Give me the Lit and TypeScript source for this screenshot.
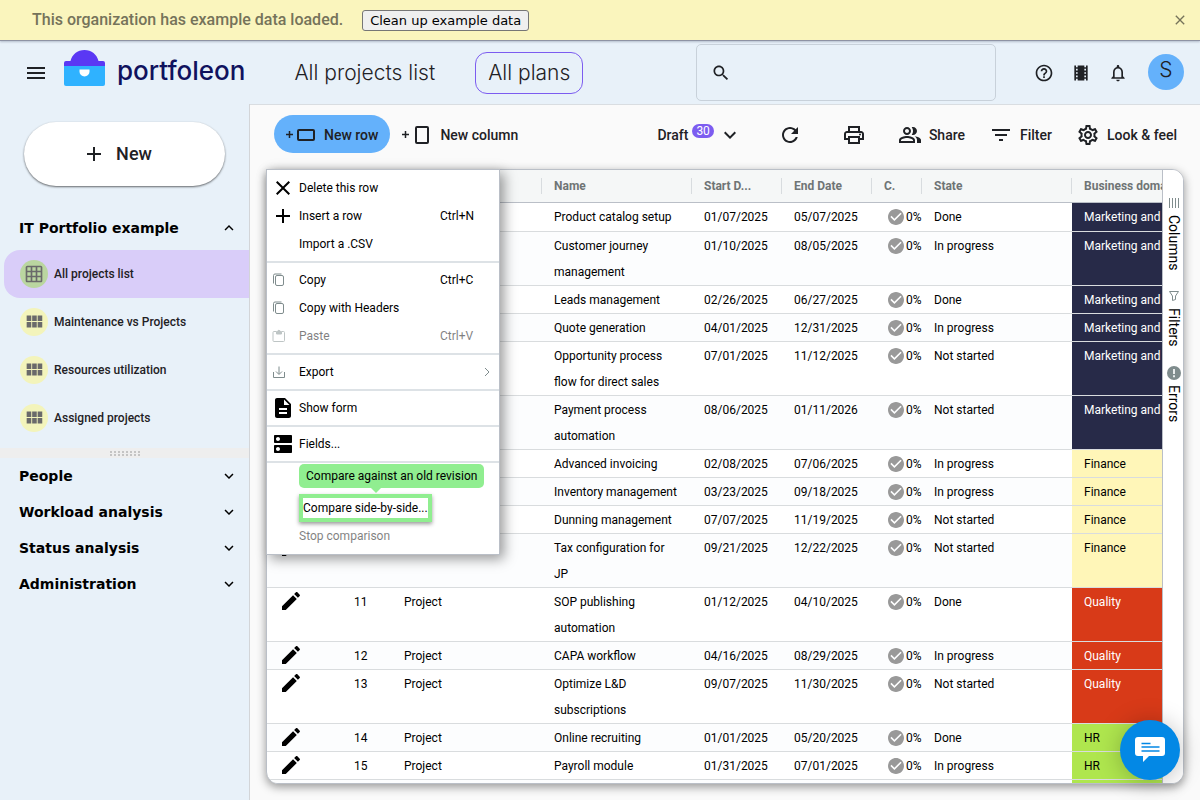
import { LitElement, html, css, svg, nothing } from "lit";
import { customElement, state } from "lit/decorators.js";
import { classMap } from "lit/directives/class-map.js";

const icon = (d: string, size = 24) =>
  html`<svg class="icon" width=${size} height=${size} viewBox="0 0 24 24" fill="currentColor" aria-hidden="true"><path d=${d}></path></svg>`;

const P = {
  menu: "M3 18h18v-2H3v2zm0-5h18v-2H3v2zm0-7v2h18V6H3z",
  search:
    "M15.5 14h-.79l-.28-.27C15.41 12.59 16 11.11 16 9.5 16 5.91 13.09 3 9.5 3S3 5.91 3 9.5 5.91 16 9.5 16c1.61 0 3.09-.59 4.23-1.57l.27.28v.79l5 4.99L20.49 19l-4.99-5zm-6 0C7.01 14 5 11.99 5 9.5S7.01 5 9.5 5 14 7.01 14 9.5 11.99 14 9.5 14z",
  help: "M11 18h2v-2h-2v2zm1-16C6.48 2 2 6.48 2 12s4.48 10 10 10 10-4.48 10-10S17.52 2 12 2zm0 18c-4.41 0-8-3.59-8-8s3.59-8 8-8 8 3.59 8 8-3.59 8-8 8zm0-14c-2.21 0-4 1.79-4 4h2c0-1.1.9-2 2-2s2 .9 2 2c0 2-3 1.75-3 5h2c0-2.25 3-2.5 3-5 0-2.21-1.79-4-4-4z",
  film: "M18 3v2h-2V3H8v2H6V3H4v18h2v-2h2v2h8v-2h2v2h2V3h-2zM8 17H6v-2h2v2zm0-4H6v-2h2v2zm0-4H6V7h2v2zm10 8h-2v-2h2v2zm0-4h-2v-2h2v2zm0-4h-2V7h2v2z",
  bell: "M12 22c1.1 0 2-.9 2-2h-4c0 1.1.9 2 2 2zm6-6v-5c0-3.07-1.63-5.64-4.5-6.32V4c0-.83-.67-1.5-1.5-1.5s-1.5.67-1.5 1.5v.68C7.64 5.36 6 7.92 6 11v5l-2 2v1h16v-1l-2-2zm-2 1H8v-6c0-2.48 1.51-4.5 4-4.5s4 2.02 4 4.5v6z",
  close:
    "M19 6.41L17.59 5 12 10.59 6.41 5 5 6.41 10.59 12 5 17.59 6.41 19 12 13.41 17.59 19 19 17.59 13.41 12z",
  plus: "M19 13h-6v6h-2v-6H5v-2h6V5h2v6h6v2z",
  down: "M7.41 8.59L12 13.17l4.59-4.58L18 10l-6 6-6-6 1.41-1.41z",
  up: "M7.41 15.41L12 10.83l4.59 4.58L18 14l-6-6-6 6z",
  gridOn:
    "M20 2H4c-1.1 0-2 .9-2 2v16c0 1.1.9 2 2 2h16c1.1 0 2-.9 2-2V4c0-1.1-.9-2-2-2zM8 20H4v-4h4v4zm0-6H4v-4h4v4zm0-6H4V4h4v4zm6 12h-4v-4h4v4zm0-6h-4v-4h4v4zm0-6h-4V4h4v4zm6 12h-4v-4h4v4zm0-6h-4v-4h4v4zm0-6h-4V4h4v4z",
  module: "M4 11h5V5H4v6zm0 7h5v-6H4v6zm6 0h5v-6h-5v6zm6 0h5v-6h-5v6zm-6-7h5V5h-5v6zm6-6v6h5V5h-5z",
  refresh:
    "M17.65 6.35C16.2 4.9 14.21 4 12 4c-4.42 0-7.99 3.58-7.99 8s3.57 8 7.99 8c3.73 0 6.84-2.55 7.73-6h-2.08c-.82 2.33-3.04 4-5.65 4-3.31 0-6-2.69-6-6s2.69-6 6-6c1.66 0 3.14.69 4.22 1.78L13 11h7V4l-2.35 2.35z",
  print:
    "M19 8h-1V3H6v5H5c-1.66 0-3 1.34-3 3v6h4v4h12v-4h4v-6c0-1.66-1.34-3-3-3zM8 5h8v3H8V5zm8 12v2H8v-4h8v2zm2-2v-2H6v2H4v-4c0-.55.45-1 1-1h14c.55 0 1 .45 1 1v4h-2zM17 11.500a1 1 0 1 0 2 0a1 1 0 1 0-2 0z",
  people:
    "M16.67 13.13C18.04 14.06 19 15.32 19 17v3h4v-3c0-2.18-3.57-3.47-6.33-3.87zM15 12c2.21 0 4-1.79 4-4s-1.79-4-4-4c-.47 0-.91.1-1.33.24C14.5 5.27 15 6.58 15 8s-.5 2.73-1.33 3.76c.42.14.86.24 1.33.24zM9 12c2.21 0 4-1.79 4-4s-1.790-4-4-4-4 1.790-4 4 1.790 4 4 4zm0-6c1.100 0 2 .9 2 2s-.9 2-2 2-2-.9-2-2 .9-2 2-2zM9 13c-2.670 0-8 1.340-8 4v3h16v-3c0-2.660-5.330-4-8-4zm6 5H3v-.99C3.200 16.290 6.300 15 9 15s5.800 1.290 6 2v1z",
  filter: "M10 18h4v-2h-4v2zM3 6v2h18V6H3zm3 7h12v-2H6v2z",
  gear: "M19.43 12.98c.04-.32.07-.64.07-.98 0-.34-.03-.66-.07-.98l2.110-1.650c.19-.15.24-.42.12-.64l-2-3.460c-.09-.16-.26-.25-.44-.25-.06 0-.12.010-.17.030l-2.490 1c-.52-.4-1.080-.73-1.690-.98l-.38-2.650C14.460 2.180 14.250 2 14 2h-4c-.25 0-.46.18-.49.42l-.38 2.650c-.61.25-1.170.59-1.690.98l-2.490-1c-.06-.02-.12-.03-.18-.03-.17 0-.34.09-.43.25l-2 3.460c-.13.22-.07.49.12.64l2.110 1.650c-.04.32-.07.65-.07.98 0 .33.030.66.070.98l-2.110 1.650c-.19.15-.24.42-.12.64l2 3.460c.09.16.26.25.44.25.06 0 .12-.01.17-.03l2.490-1c.52.4 1.080.73 1.690.98l.38 2.650c.03.24.24.42.49.42h4c.25 0 .46-.18.49-.42l.38-2.650c.61-.25 1.170-.59 1.690-.98l2.490 1c.06.02.12.03.18.03.17 0 .34-.09.43-.25l2-3.460c.12-.22.07-.49-.12-.64l-2.110-1.650zm-1.980-1.710c.04.31.05.52.05.73 0 .21-.02.43-.05.73l-.14 1.130.89.7 1.080.84-.7 1.210-1.270-.51-1.040-.42-.9.680c-.43.32-.84.56-1.250.73l-1.060.43-.16 1.130-.2 1.350h-1.400l-.19-1.350-.16-1.130-1.060-.43c-.43-.18-.83-.41-1.230-.71l-.91-.7-1.060.43-1.270.51-.7-1.210 1.080-.84.890-.7-.14-1.130c-.03-.31-.05-.54-.05-.74s.02-.43.05-.73l.14-1.130-.89-.7-1.080-.84.700-1.210 1.270.51 1.040.42.900-.68c.43-.32.84-.56 1.250-.73l1.060-.43.160-1.130.2-1.350h1.390l.19 1.350.16 1.130 1.060.43c.43.18.83.41 1.230.71l.91.7 1.060-.43 1.270-.51.700 1.210-1.070.85-.89.700.14 1.130zM12 8c-2.210 0-4 1.790-4 4s1.790 4 4 4 4-1.790 4-4-1.790-4-4-4zm0 6c-1.100 0-2-.9-2-2s.9-2 2-2 2 .9 2 2-.9 2-2 2z",
  edit: "M3 17.250V21h3.750L17.810 9.940l-3.750-3.750L3 17.250zM20.710 7.040c.39-.39.39-1.020 0-1.410l-2.340-2.340c-.39-.39-1.020-.39-1.410 0l-1.830 1.830 3.750 3.750 1.830-1.830z",
  check:
    "M12 2C6.480 2 2 6.480 2 12s4.480 10 10 10 10-4.480 10-10S17.520 2 12 2zm-2 15l-5-5 1.410-1.410L10 14.170l7.590-7.590L19 8l-9 9z",
  form: "M14 2H6c-1.100 0-2 .9-2 2v16c0 1.100.9 2 2 2h12c1.100 0 2-.9 2-2V8l-6-6zm2 16H8v-2h8v2zm0-4H8v-2h8v2zm-3-5V3.500L18.500 9H13z",
  fields:
    "M20 13H4c-.55 0-1 .45-1 1v6c0 .55.45 1 1 1h16c.55 0 1-.45 1-1v-6c0-.55-.45-1-1-1zM7 19c-1.100 0-2-.9-2-2s.9-2 2-2 2 .9 2 2-.9 2-2 2zM20 3H4c-.55 0-1 .45-1 1v6c0 .55.45 1 1 1h16c.55 0 1-.45 1-1V4c0-.55-.45-1-1-1zM7 9c-1.100 0-2-.9-2-2s.9-2 2-2 2 .9 2 2-.9 2-2 2z",
};

const line16 = (body: unknown) =>
  html`<svg class="icon thin" width="16" height="16" viewBox="0 0 16 16" fill="none" stroke="currentColor" aria-hidden="true">${body}</svg>`;

const copyIcon = line16(svg`<rect x="4.500" y="3.500" width="8" height="10" rx="1.500"></rect><path d="M2.500 11.500V3.500a1.500 1.500 0 0 1 1.500-1.500h6.500"></path>`);
const pasteIcon = line16(svg`<path d="M5 3.500H3a1 1 0 0 0-1 1v8a1 1 0 0 0 1 1h9.500a1 1 0 0 0 1-1v-8a1 1 0 0 0-1-1H11"></path><path d="M5.500 3.500h1.200a1.200 1.200 0 0 1 2.400 0h1.400v2.500h-5z" fill="currentColor"></path>`);
const exportIcon = line16(svg`<path d="M2.500 8v5.500h11V8M8 2.500v7.500M5 7.500l3 3 3-3"></path>`);
const columnsIcon = line16(svg`<path d="M3.500 3v10M6.500 3v10M9.500 3v10M12.500 3v10"></path>`);
const funnelIcon = line16(svg`<path d="M3.500 3.500h9L9.500 8v3.500l-3 1V8z"></path>`);
const errorIcon = html`<svg class="icon thin" width="16" height="16" viewBox="0 0 16 16" aria-hidden="true"><circle cx="8" cy="8" r="7" fill="currentColor"></circle><path d="M7 4h2v5H7zM7 10.200h2v2H7z" fill="#e8ecec"></path></svg>`;

type Row = [string, string, string, string, string];
const MK = "Marketing and Sales";
const ROWS: Row[] = [
  ["Product catalog setup", "01/07/2025", "05/07/2025", "Done", MK],
  ["Customer journey management", "01/10/2025", "08/05/2025", "In progress", MK],
  ["Leads management", "02/26/2025", "06/27/2025", "Done", MK],
  ["Quote generation", "04/01/2025", "12/31/2025", "In progress", MK],
  ["Opportunity process flow for direct sales", "07/01/2025", "11/12/2025", "Not started", MK],
  ["Payment process automation", "08/06/2025", "01/11/2026", "Not started", MK],
  ["Advanced invoicing", "02/08/2025", "07/06/2025", "In progress", "Finance"],
  ["Inventory management", "03/23/2025", "09/18/2025", "In progress", "Finance"],
  ["Dunning management", "07/07/2025", "11/19/2025", "Not started", "Finance"],
  ["Tax configuration for JP", "09/21/2025", "12/22/2025", "Not started", "Finance"],
  ["SOP publishing automation", "01/12/2025", "04/10/2025", "Done", "Quality"],
  ["CAPA workflow", "04/16/2025", "08/29/2025", "In progress", "Quality"],
  ["Optimize L&D subscriptions", "09/07/2025", "11/30/2025", "Not started", "Quality"],
  ["Online recruiting", "01/01/2025", "05/20/2025", "Done", "HR"],
  ["Payroll module", "01/31/2025", "07/01/2025", "In progress", "HR"],
  ["", "", "", "", "HR"],
];

const base = css`
  * { box-sizing: border-box; }
  button { font: inherit; color: inherit; background: none; border: 0; padding: 0; margin: 0; cursor: pointer; }
  a { color: inherit; text-decoration: none; }
  .icon { display: block; flex: none; }
`;

@customElement("org-banner")
class OrgBanner extends LitElement {
  static styles = [base, css`
    :host { display: flex; align-items: center; height: 41px; padding: 0 12px 0 32px; background: #faf5bd; border-bottom: 1px solid #8e93a4; box-shadow: 0 1px 2px rgba(60, 70, 100, .3); position: relative; font: 500 16px/20px Roboto, sans-serif; color: #75735a; }
    .clean { margin-left: 19px; height: 21px; padding: 0 7px; border: 1px solid #767676; border-radius: 3px; background: #efefef; color: #000; font: 400 13px/19px "DejaVu Sans", sans-serif; }
    .close { margin-left: auto; padding: 0; }
  `];
  render() {
    return html`<span>This organization has example data loaded.</span>
      <button class="clean">Clean up example data</button>
      <button class="close" aria-label="Dismiss">${icon(P.close, 16)}</button>`;
  }
}

@customElement("app-header")
class AppHeader extends LitElement {
  static styles = [base, css`
    :host { display: flex; align-items: center; height: 63px; padding: 0 16px 0 24px; font: 300 21px/24px Inter, sans-serif; color: #1f2125; }
    .logo { display: flex; align-items: center; margin-left: 16px; gap: 12px; color: #10125e; font: 500 26px/32px Inter, sans-serif; }
    .logo svg { display: block; margin-bottom: 10px; }
    .logo span { margin-bottom: 4px; }
    .title { margin-left: 49px; }
    .plans { margin-left: 40px; height: 42px; padding: 0 12px; border: 1px solid #7c5cf0; border-radius: 12px; }
    .search { display: flex; align-items: center; gap: 8px; width: 300px; height: 57px; margin-left: auto; padding: 0 14px; border: 1px solid #c8d1da; border-radius: 5px; }
    .search input { flex: 1; min-width: 0; border: 0; outline: 0; background: none; font: 400 16px/20px Roboto, sans-serif; }
    .tools { display: flex; align-items: center; gap: 17px; margin-left: 38px; }
    .avatar { width: 36px; height: 36px; margin: 0 0 2px 20px; padding-bottom: 4px; border-radius: 50%; background: #64b1fb; }
  `];
  render() {
    return html`<button aria-label="Menu">${icon(P.menu)}</button>
      <a class="logo" href="#">
        <svg width="41" height="36" viewBox="0 0 41 36" aria-hidden="true">
          <path d="M0 15h41v19a2 2 0 0 1-2 2H2a2 2 0 0 1-2-2z" fill="#2fb2ff"></path>
          <path d="M0 16v-3a2 2 0 0 1 2-2h4.500C8 4.500 13.500 0 20.500 0S33 4.500 34.500 11H39a2 2 0 0 1 2 2v3z" fill="#5a38f4"></path>
          <path d="M15.500 19.500h10v2a5 5 0 0 1-10 0z" fill="#fff"></path>
        </svg>
        <span>portfoleon</span>
      </a>
      <span class="title">All projects list</span>
      <button class="plans">All plans</button>
      <label class="search">${icon(P.search, 20)}<input type="search" aria-label="Search" /></label>
      <div class="tools">
        <button aria-label="Help">${icon(P.help, 20)}</button>
        <button aria-label="Tutorials">${icon(P.film, 20)}</button>
        <button aria-label="Notifications">${icon(P.bell, 20)}</button>
      </div>
      <button class="avatar" aria-label="Account">S</button>`;
  }
}

@customElement("side-nav")
class SideNav extends LitElement {
  @state() active = 0;
  static styles = [base, css`
    :host { display: flex; flex-direction: column; width: 250px; flex: none; border-right: 1px solid #d3d5d8; font: 500 12px/20px Roboto, sans-serif; color: #1f2125; }
    .new { display: flex; align-items: center; justify-content: center; gap: 10px; height: 64px; margin: 18px 24px 24px; padding-right: 15px; border-radius: 32px; background: #fff; box-shadow: 0 1px 2px rgba(0, 0, 0, .5), 0 1px 3px rgba(0, 0, 0, .1); font: 500 18px/24px Roboto, sans-serif; }
    .section { display: flex; align-items: center; justify-content: space-between; width: 100%; height: 36px; padding: 0 11px 0 19px; color: #000; font: 700 14px/20px "DejaVu Sans", sans-serif; }
    .list { padding: 4px 0 6px 4px; }
    .item { display: flex; align-items: center; gap: 6px; height: 48px; padding-left: 16px; border-radius: 16px 0 0 16px; }
    .item.active { background: #d9cdf9; }
    .dot { display: grid; place-items: center; width: 28px; height: 28px; border-radius: 50%; background: #f3f4bb; color: #6a6a6a; }
    .active .dot { background: #bad6a0; }
    .split { display: grid; place-items: center; height: 10px; background: #eee; color: #c4c4c4; }
  `];
  section(name: string, open = false) {
    return html`<button class="section" aria-expanded=${open ? "true" : "false"}><span>${name}</span>${icon(open ? P.up : P.down, 18)}</button>`;
  }
  render() {
    const items = ["All projects list", "Maintenance vs Projects", "Resources utilization", "Assigned projects"];
    return html`<button class="new">${icon(P.plus)}<span>New</span></button>
      ${this.section("IT Portfolio example", true)}
      <nav class="list">
        ${items.map((t, i) => html`<a href="#" class=${classMap({ item: true, active: i === this.active })} @click=${() => (this.active = i)}>
          <span class="dot">${i ? icon(P.module, 22) : icon(P.gridOn, 20)}</span><span>${t}</span></a>`)}
      </nav>
      <div class="split"><svg width="30" height="5" viewBox="0 0 30 5" fill="currentColor" aria-hidden="true">
        ${[0, 4, 8, 12, 16, 20, 24, 28].map((x) => svg`<rect x=${x} y="0" width="2" height="2"></rect><rect x=${x} y="3" width="2" height="2"></rect>`)}</svg></div>
      ${["People", "Workload analysis", "Status analysis", "Administration"].map((s) => this.section(s))}`;
  }
}

@customElement("tool-bar")
class ToolBar extends LitElement {
  static styles = [base, css`
    :host { display: flex; align-items: center; height: 38px; margin: 10px 11px 16px 24px; font: 500 14px/20px Roboto, sans-serif; color: #1f2125; }
    button { display: flex; align-items: center; height: 38px; padding: 2px 12px 0; border-radius: 19px; gap: 7px; white-space: nowrap; }
    .row { background: #64b1fb; gap: 8px; }
    .column { gap: 10px; }
    .right { display: flex; align-items: center; margin-left: auto; }
    .draft { gap: 4px; }
    .badge { align-self: flex-start; margin: 7px 0 0; padding: 0 4px; border-radius: 7px; background: #7c5cf0; color: #fff; font: 400 12px/14px Roboto, sans-serif; }
    .print { margin: 0 8px 0 16px; }
    .reload { margin-left: 12px; }
  `];
  render() {
    return html`
      <button class="row"><svg class="icon" width="30" height="20" viewBox="0 0 30 20" fill="none" stroke="currentColor" aria-hidden="true"><path d="M0 9.500h7M3.500 6v7" stroke-width="1.500"></path><rect x="12" y="5" width="16" height="10" rx="1" stroke-width="2"></rect></svg>New row</button>
      <button class="column"><svg class="icon" width="28" height="20" viewBox="0 0 28 20" fill="none" stroke="currentColor" aria-hidden="true"><path d="M0 9.500h7M3.500 6v7" stroke-width="1.500"></path><rect x="14" y="2" width="12" height="16" rx="1" stroke-width="2"></rect></svg>New column</button>
      <div class="right">
        <button class="draft">Draft<span class="badge">30</span>${icon(P.down)}</button>
        <button class="reload" aria-label="Refresh">${icon(P.refresh)}</button>
        <button class="print" aria-label="Print">${icon(P.print)}</button>
        <button>${icon(P.people)}Share</button>
        <button>${icon(P.filter)}Filter</button>
        <button>${icon(P.gear)}Look &amp; feel</button>
      </div>`;
  }
}

@customElement("row-menu")
class RowMenu extends LitElement {
  static styles = [base, css`
    :host { display: block; width: 234px; padding: 4px 0; background: #fff; border: 1px solid #babfc7; box-shadow: 4px 4px 12px rgba(0, 0, 0, .4); font: 400 12px/18px Roboto, sans-serif; color: #000; }
    .item { display: grid; grid-template-columns: 32px 141px 1fr; align-items: center; position: relative; width: 100%; height: 28px; text-align: left; }
    .item:disabled { opacity: .5; color: #000; }
    .glyph { display: grid; place-items: center start; padding: 0 0 1px 4px; }
    .thin { color: #7f8c8d; }
    hr { height: 2px; margin: 3px 0; border: 0; background: #dde2e6; }
    .arrow { justify-self: end; margin-right: 4px; }
    .target { justify-self: start; border: 4px solid #90ee90; height: 28px; line-height: 20px; white-space: nowrap; box-shadow: 0 2px 4px rgba(0, 0, 0, .4); position: relative; }
    .tip { position: absolute; left: 32px; bottom: 34px; padding: 0 7px; border-radius: 5px; background: #90ee90; line-height: 24px; white-space: nowrap; }
    .tip::after { content: ""; position: absolute; left: 72px; top: 24px; border: 5px solid transparent; border-bottom: 0; border-top-color: #90ee90; }
    .gap { height: 28px; }
  `];
  item(label: string, glyph: unknown = nothing, end: unknown = nothing, disabled = false) {
    return html`<button class="item" role="menuitem" ?disabled=${disabled}><span class="glyph">${glyph}</span><span>${label}</span><span>${end}</span></button>`;
  }
  render() {
    return html`
      ${this.item("Delete this row", icon(P.close))}
      ${this.item("Insert a row", icon(P.plus), "Ctrl+N")}
      ${this.item("Import a .CSV")}
      <hr />
      ${this.item("Copy", copyIcon, "Ctrl+C")}
      ${this.item("Copy with Headers", copyIcon)}
      ${this.item("Paste", pasteIcon, "Ctrl+V", true)}
      <hr />
      <button class="item" role="menuitem"><span class="glyph">${exportIcon}</span><span>Export</span><span class="arrow">${line16(svg`<path d="M6 4l4 4-4 4"></path>`)}</span></button>
      <hr />
      ${this.item("Show form", icon(P.form))}
      <hr />
      ${this.item("Fields...", icon(P.fields))}
      <hr />
      <div class="gap"></div>
      <button class="item" role="menuitem"><span class="glyph"></span><span class="target">Compare side-by-side...</span><span class="tip" role="tooltip">Compare against an old revision</span></button>
      ${this.item("Stop comparison", nothing, nothing, true)}`;
  }
}

@customElement("project-grid")
class ProjectGrid extends LitElement {
  static styles = [base, css`
    :host { display: flex; flex: 1; min-height: 0; margin: 0 16px 16px; position: relative; font: 400 12px/26px Roboto, sans-serif; color: #000; }
    .card { display: flex; flex: 1; min-width: 0; overflow: hidden; background: #fff; border: 1px solid #babfc7; border-radius: 3px 12px 12px 12px; box-shadow: 0 3px 10px rgba(0, 0, 0, .4); }
    .view { flex: 1; min-width: 0; overflow: hidden; }
    table { width: 100%; min-width: 955px; table-layout: fixed; border-collapse: separate; border-spacing: 0; }
    .c-edit { width: 75px; } .c-num { width: 50px; } .c-type { width: 150px; } .c-date { width: 90px; }
    th { padding: 0; height: 33px; background: #f5f7f7; border-bottom: 1px solid #babfc7; text-align: left; color: #6f7475; font-weight: 700; line-height: 16px; white-space: nowrap; }
    th div { height: 16px; padding-left: 12px; border-right: 1px solid #d8dcdf; }
    th .bare { border-color: transparent; }
    td { height: 28px; padding: 1px 12px 0; border-bottom: 1px solid #d9dcde; vertical-align: top; }
    td button { display: block; }
    tr:nth-child(even) td { background: #fcfdfe; }
    tbody tr:first-child td { padding-bottom: 1px; }
    td.pct { padding: 1px 0 0 16px; white-space: nowrap; }
    .pct span { display: flex; align-items: center; gap: 2px; }
    .pct .icon { color: #999; }
    td.dom { white-space: nowrap; }
    tr td.marketing { background: #272a48; color: #fff; }
    tr td.finance { background: #fff6b8; }
    tr td.quality { background: #d83a18; color: #fff; }
    tr td.hr { background: #afe64e; }
    tr:nth-child(even) td.marketing { background: #272a48; }
    tr:nth-child(even) td.finance { background: #fff6b8; }
    tr:nth-child(even) td.quality { background: #d83a18; }
    tr:nth-child(even) td.hr { background: #afe64e; }
    .tabs { display: flex; flex-direction: column; width: 21px; padding-top: 16px; border-left: 1px solid #babfc7; background: #fff; }
    .tabs button { display: flex; align-items: center; gap: 4px; writing-mode: vertical-rl; width: 22px; padding: 9px 0; font: 400 14px/20px Roboto, sans-serif; }
    .thin { color: #7f8c8d; }
    .menu { position: absolute; left: 0; top: 0; }
  `];
  render() {
    const cls: Record<string, string> = { [MK]: "marketing", Finance: "finance", Quality: "quality", HR: "hr" };
    const heads = ["", "", "Type", "Name", "Start D...", "End Date", "C.", "State", "Business domain"];
    return html`<div class="card">
        <div class="view"><table>
          <colgroup><col class="c-edit" /><col class="c-num" /><col class="c-type" /><col class="c-type" /><col class="c-date" /><col class="c-date" /><col class="c-num" /><col class="c-type" /><col /></colgroup>
          <thead><tr>${heads.map((h, i) => html`<th><div class=${i > 7 ? "bare" : ""}>${h}</div></th>`)}</tr></thead>
          <tbody>${ROWS.map(([name, start, end, st, dom], i) => name ? html`<tr>
            <td><button aria-label="Edit row">${icon(P.edit)}</button></td>
            <td>${i + 1}</td><td>Project</td><td>${name}</td><td>${start}</td><td>${end}</td>
            <td class="pct"><span><svg class="icon" width="16" height="16" viewBox="2 2 20 20" fill="currentColor" aria-hidden="true"><path d=${P.check}></path></svg>0%</span></td>
            <td>${st}</td><td class="dom ${cls[dom]}">${dom}</td></tr>`
            : html`<tr><td colspan="8"></td><td class=${cls[dom]}></td></tr>`)}</tbody>
        </table></div>
        <div class="tabs">
          <button>${columnsIcon}<span>Columns</span></button>
          <button>${funnelIcon}<span>Filters</span></button>
          <button>${errorIcon}<span>Errors</span></button>
        </div>
      </div>
      <row-menu class="menu" role="menu"></row-menu>`;
  }
}

@customElement("app-root")
class AppRoot extends LitElement {
  static styles = [base, css`
    :host { display: flex; flex-direction: column; height: 100vh; overflow: hidden; background: #e8f1f9; }
    .body { display: flex; flex: 1; min-height: 0; }
    main { display: flex; flex-direction: column; flex: 1; min-width: 0; background: #fafafa; border-top: 1px solid #d9dde1; }
    .chat { position: fixed; right: 20px; bottom: 20px; width: 60px; height: 60px; display: grid; place-items: center; border-radius: 50%; background: #0388e5; box-shadow: 0 2px 24px rgba(0, 0, 0, .25); }
  `];
  render() {
    return html`<org-banner></org-banner>
      <app-header></app-header>
      <div class="body">
        <side-nav></side-nav>
        <main><tool-bar></tool-bar><project-grid></project-grid></main>
      </div>
      <button class="chat" aria-label="Open chat">
        <svg width="30" height="26" viewBox="0 0 30 26" aria-hidden="true"><path d="M3 0h24a3 3 0 0 1 3 3v13a3 3 0 0 1-3 3H14l-6 6v-6H3a3 3 0 0 1-3-3V3a3 3 0 0 1 3-3z" fill="#fff"></path><path d="M6.500 6.500h9M6.500 10h18M6.500 14h18" stroke="#0388e5" stroke-width="1.300"></path></svg>
      </button>`;
  }
}
